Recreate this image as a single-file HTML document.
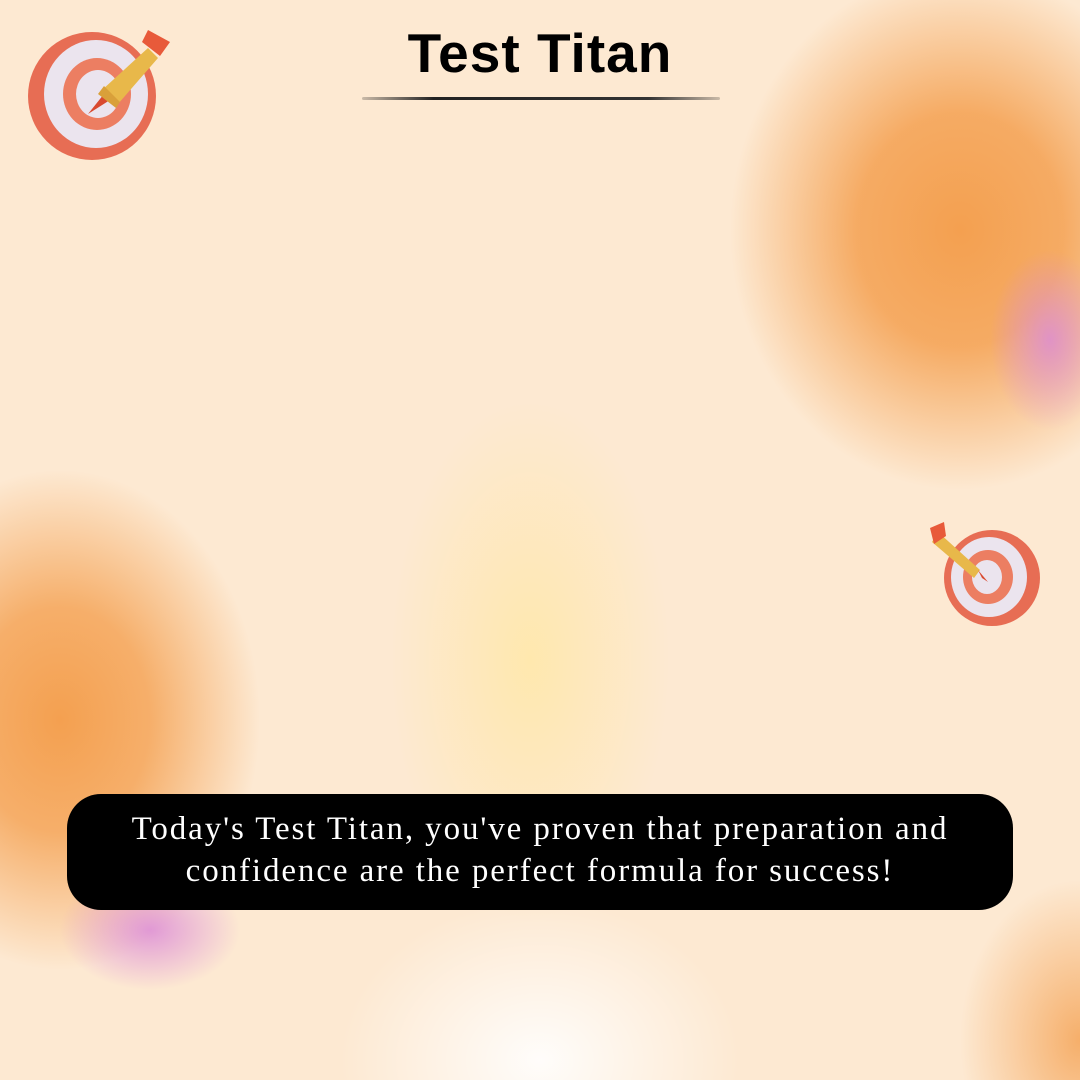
<!DOCTYPE html>
<html><head><meta charset="utf-8"><style>
html,body{margin:0;padding:0}
body{width:1080px;height:1080px;overflow:hidden;position:relative;background:#fde9d2;
background:
radial-gradient(ellipse 60px 90px at 1050px 340px, rgba(220,140,210,.85), rgba(220,140,210,0) 100%),
radial-gradient(ellipse 90px 60px at 150px 930px, rgba(220,140,215,.85), rgba(220,140,215,0) 100%),
radial-gradient(ellipse 230px 260px at 960px 230px, #f4a050 0%, rgba(244,160,80,.85) 45%, rgba(244,160,80,0) 100%),
radial-gradient(ellipse 200px 250px at 60px 720px, #f4a050 0%, rgba(244,160,80,.8) 45%, rgba(244,160,80,0) 100%),
radial-gradient(ellipse 140px 260px at 530px 660px, rgba(255,232,170,.9), rgba(255,232,170,0) 100%),
radial-gradient(ellipse 200px 160px at 540px 1060px, rgba(255,255,255,.9), rgba(255,255,255,0) 100%),
radial-gradient(ellipse 120px 160px at 1080px 1040px, rgba(244,160,80,.8), rgba(244,160,80,0) 100%),
#fde9d2;}
h1{position:absolute;left:0;width:1080px;top:21px;margin:0;text-align:center;font:bold 55px "Liberation Sans",sans-serif;color:#000;letter-spacing:1px}
.line{position:absolute;left:362px;top:97px;width:358px;height:3px;background:linear-gradient(90deg,rgba(0,0,0,.2),#222 20%,#333 80%,rgba(0,0,0,.2));border-radius:2px}
.box{position:absolute;left:67px;top:794px;width:946px;height:116px;background:#000;border-radius:34px;color:#fff;text-align:center;font:33px/42px "Liberation Serif",serif;box-sizing:border-box;padding-top:14px;letter-spacing:1.9px;white-space:nowrap}
svg{position:absolute}
</style></head><body>
<svg style="left:20px;top:20px" width="160" height="150" viewBox="0 0 160 150">
<ellipse cx="72" cy="76" rx="64" ry="64" fill="#e76d54"/>
<ellipse cx="76" cy="74" rx="52" ry="54" fill="#ebe4ee"/>
<ellipse cx="77" cy="74" rx="34" ry="36" fill="#ec7e62"/>
<ellipse cx="78" cy="74" rx="22" ry="24" fill="#ebe4ee"/>
<path d="M68 94 L84 74 L90 80 Z" fill="#d94a30"/>
<path d="M82 70 L128 28 L138 38 L98 84 Z" fill="#e8b84a"/>
<path d="M78 74 L96 88 L100 82 L84 66 Z" fill="#d9a03a"/>
<path d="M128 10 L150 22 L140 36 L122 22 Z" fill="#e85a3a"/>
</svg>
<svg style="left:928px;top:522px" width="116" height="110" viewBox="0 0 116 110">
<ellipse cx="64" cy="56" rx="48" ry="48" fill="#e76d54"/>
<ellipse cx="61" cy="55" rx="38" ry="40" fill="#ebe4ee"/>
<ellipse cx="60" cy="55" rx="25" ry="27" fill="#ec7e62"/>
<ellipse cx="59" cy="55" rx="15" ry="17" fill="#ebe4ee"/>
<path d="M10 10 L52 48 L46 56 L4 20 Z" fill="#e8b84a"/>
<path d="M2 6 L16 0 L18 14 L6 22 Z" fill="#e85a3a"/>
<path d="M50 48 L60 60 L54 56 Z" fill="#d94a30"/>
</svg>
<h1>Test Titan</h1>
<div class="line"></div>
<div class="box">Today's Test Titan, you've proven that preparation and<br>confidence are the perfect formula for success!</div>
</body></html>
